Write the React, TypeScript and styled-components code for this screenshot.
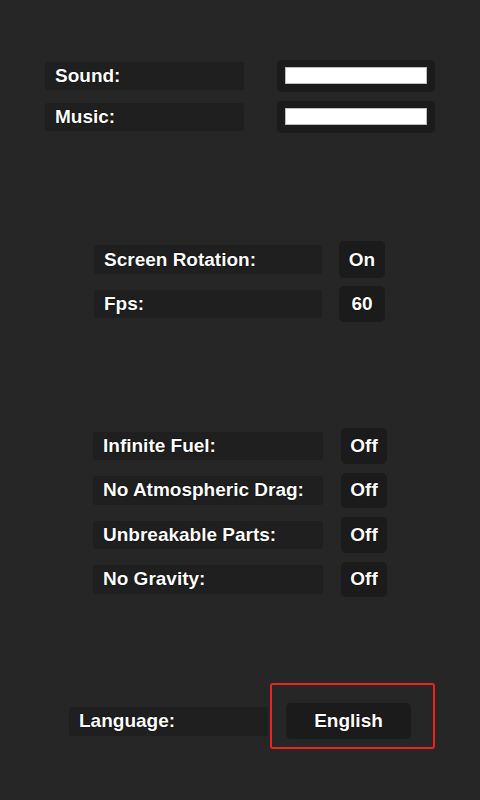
import React from "react";
import styled, { createGlobalStyle } from "styled-components";

const Global = createGlobalStyle`
  html, body { margin: 0; padding: 0; background: #262626; }
  body { font-family: "Liberation Sans", Arial, sans-serif; }
`;

const Page = styled.div`
  width: 480px;
  height: 800px;
  background: #262626;
  display: flex;
  flex-direction: column;
  padding-top: 60px;
  box-sizing: border-box;
`;

const Section = styled.div<{ $left: number; $gap: number; $top: number }>`
  display: flex;
  flex-direction: column;
  gap: ${(p) => p.$gap}px;
  margin-left: ${(p) => p.$left}px;
  margin-top: ${(p) => p.$top}px;
`;

const Row = styled.div<{ $gap: number; $h: number }>`
  display: flex;
  align-items: center;
  gap: ${(p) => p.$gap}px;
  height: ${(p) => p.$h}px;
`;

const Label = styled.div<{ $w: number }>`
  width: ${(p) => p.$w}px;
  height: 28.5px;
  background: #1f1f1f;
  border-radius: 3px;
  box-sizing: border-box;
  padding-left: 10px;
  display: flex;
  align-items: center;
  color: #ffffff;
  font-size: 19px;
  font-weight: 700;
  text-shadow: 0 0 1px #000, 0 0 1px #000;
`;

const LangLabel = styled(Label)`
  align-self: flex-start;
  margin-top: 24px;
`;

const SliderBox = styled.div`
  width: 158px;
  height: 32px;
  background: #1b1b1b;
  border-radius: 5px;
  box-sizing: border-box;
  padding: 7px 8px 8px 8px;
  display: flex;
`;

const SliderFill = styled.div`
  flex: 1;
  background: #ffffff;
  border: 1px solid #bdbdbd;
  box-sizing: border-box;
`;

const Toggle = styled.div<{ $w: number; $h: number }>`
  width: ${(p) => p.$w}px;
  height: ${(p) => p.$h}px;
  background: #1b1b1b;
  border-radius: 5px;
  display: flex;
  align-items: center;
  justify-content: center;
  color: #ffffff;
  font-size: 19px;
  font-weight: 700;
  text-shadow: 0 0 1px #000, 0 0 1px #000;
`;

const Highlight = styled.div`
  width: 165px;
  height: 66px;
  box-sizing: border-box;
  border: 2px solid #e8261e;
  border-radius: 3px;
  padding: 18px 0 0 14px;
  display: flex;
  align-items: flex-start;
`;

const cheats = ["Infinite Fuel:", "No Atmospheric Drag:", "Unbreakable Parts:", "No Gravity:"];

export default function App() {
  return (
    <>
      <Global />
      <Page>
        <Section $left={45} $gap={9} $top={0}>
          {["Sound:", "Music:"].map((t) => (
            <Row key={t} $gap={33} $h={32}>
              <Label $w={199}>{t}</Label>
              <SliderBox>
                <SliderFill />
              </SliderBox>
            </Row>
          ))}
        </Section>

        <Section $left={94} $gap={8} $top={108}>
          <Row $gap={17} $h={37}>
            <Label $w={228}>Screen Rotation:</Label>
            <Toggle $w={46} $h={37}>On</Toggle>
          </Row>
          <Row $gap={17} $h={36}>
            <Label $w={228}>Fps:</Label>
            <Toggle $w={46} $h={36}>60</Toggle>
          </Row>
        </Section>

        <Section $left={93} $gap={9} $top={106}>
          {cheats.map((t) => (
            <Row key={t} $gap={18} $h={35.5}>
              <Label $w={230}>{t}</Label>
              <Toggle $w={46} $h={35.5}>Off</Toggle>
            </Row>
          ))}
        </Section>

        <Section $left={69} $gap={0} $top={86}>
          <Row $gap={2} $h={66}>
            <LangLabel $w={199}>Language:</LangLabel>
            <Highlight>
              <Toggle $w={125} $h={36}>English</Toggle>
            </Highlight>
          </Row>
        </Section>
      </Page>
    </>
  );
}
